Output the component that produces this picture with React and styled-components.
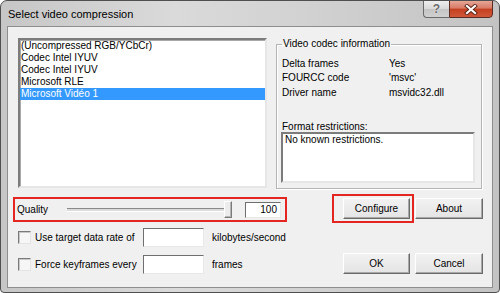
import React from 'react'
import styled, { createGlobalStyle } from 'styled-components'

const GlobalStyle = createGlobalStyle`
  html, body {
    margin: 0;
    padding: 0;
    background: #ffffff;
  }
  body {
    font-family: "Liberation Sans", Arial, sans-serif;
    font-size: 10px;
    color: #000;
  }
`

const codecs = [
  '(Uncompressed RGB/YCbCr)',
  'Codec Intel IYUV',
  'Codec Intel IYUV',
  'Microsoft RLE',
  'Microsoft Vidéo 1',
]

const info = [
  ['Delta frames', 'Yes'],
  ['FOURCC code', "'msvc'"],
  ['Driver name', 'msvidc32.dll'],
]

const App = () => {
  return (
    <>
      <GlobalStyle />
      <Window>
        <TitleBar>
          <Title>Select video compression</Title>
          <Caption>
            <HelpBtn>?</HelpBtn>
            <CloseBtn>
              <svg width="14" height="11" viewBox="0 0 14 11">
                <path d="M3 2 L11 9 M11 2 L3 9" stroke="#5b2418" strokeWidth="4" strokeLinecap="square" fill="none" />
                <path d="M3 2 L11 9 M11 2 L3 9" stroke="#ffffff" strokeWidth="2.2" strokeLinecap="square" fill="none" />
              </svg>
            </CloseBtn>
          </Caption>
        </TitleBar>

        <Client>
          <TopRow>
            <ListBox>
              {codecs.map((c, i) => (
                <ListItem key={i} $selected={i === 4}>{c}</ListItem>
              ))}
            </ListBox>

            <Group>
              <Legend>Video codec information</Legend>
              <InfoGrid>
                {info.map(([k, v]) => (
                  <React.Fragment key={k}>
                    <span>{k}</span>
                    <span>{v}</span>
                  </React.Fragment>
                ))}
              </InfoGrid>
              <SubLabel>Format restrictions:</SubLabel>
              <Memo>No known restrictions.</Memo>
            </Group>
          </TopRow>

          <BottomArea>
            <LeftCol>
              <QualityBox>
                <QualityLabel>Quality</QualityLabel>
                <Slider>
                  <Track />
                  <Thumb />
                </Slider>
                <ValueEdit>100</ValueEdit>
              </QualityBox>

              <OptionRow>
                <Check />
                <OptionLabel>Use target data rate of</OptionLabel>
                <Edit />
                <span>kilobytes/second</span>
              </OptionRow>
              <OptionRow>
                <Check />
                <OptionLabel>Force keyframes every</OptionLabel>
                <Edit />
                <span>frames</span>
              </OptionRow>
            </LeftCol>

            <RightCol>
              <ButtonRow>
                <Highlight>
                  <Button>Configure</Button>
                </Highlight>
                <Button $wide>About</Button>
              </ButtonRow>
              <ButtonRow $indent>
                <Button>OK</Button>
                <Button $wide>Cancel</Button>
              </ButtonRow>
            </RightCol>
          </BottomArea>
        </Client>
      </Window>
    </>
  )
}

const Window = styled.div`
  width: 500px;
  height: 293px;
  box-sizing: border-box;
  border: 1px solid #4f4f4f;
  border-radius: 7px 7px 4px 4px;
  background: linear-gradient(to right, #c6c6c6 0%, #dadada 35%, #d2d2d2 60%, #c3c3c3 100%);
  display: flex;
  flex-direction: column;
  overflow: hidden;
`

const TitleBar = styled.div`
  height: 25px;
  display: flex;
  align-items: center;
  padding-left: 7px;
  padding-right: 6px;
`

const Title = styled.div`
  font-size: 11px;
  color: #000;
  padding-top: 1px;
`

const Caption = styled.div`
  margin-left: auto;
  align-self: flex-start;
  display: flex;
  margin-top: -1px;
`

const HelpBtn = styled.div`
  width: 26px;
  height: 18px;
  box-sizing: border-box;
  border: 1px solid #6a6a6a;
  border-right: none;
  border-radius: 0 0 0 4px;
  background: linear-gradient(#eeeeee 0%, #d8d8d8 50%, #c4c4c4 51%, #d0d0d0 100%);
  color: #6b6b6b;
  font-weight: bold;
  font-size: 12px;
  display: flex;
  align-items: center;
  justify-content: center;
  text-shadow: 0 0 2px #fff;
`

const CloseBtn = styled.div`
  width: 44px;
  height: 18px;
  box-sizing: border-box;
  border: 1px solid #5a2c24;
  border-radius: 0 0 4px 0;
  background: linear-gradient(#e6a696 0%, #d77a66 45%, #c3401f 50%, #d0573a 100%);
  display: flex;
  align-items: center;
  justify-content: center;
`

const Client = styled.div`
  flex: 1;
  margin: 0 6px 4px 6px;
  border: 1px solid #8e8e8e;
  background: #f0f0f0;
  padding: 11px 0 0 0;
  box-sizing: border-box;
`

const TopRow = styled.div`
  display: flex;
  padding-left: 10px;
  gap: 9px;
  align-items: flex-start;
`

const ListBox = styled.div`
  width: 249px;
  height: 150px;
  box-sizing: border-box;
  background: #fff;
  border: 2px solid;
  border-color: #7c7c7c #e6e6e6 #e6e6e6 #7c7c7c;
  box-shadow: inset 1px 1px 0 #a9a9a9;
  padding: 0;
`

const ListItem = styled.div`
  height: 12px;
  line-height: 12px;
  padding-left: 1px;
  white-space: nowrap;
  background: ${p => (p.$selected ? '#3399ff' : 'transparent')};
  color: ${p => (p.$selected ? '#fff' : '#000')};
`

const Group = styled.fieldset`
  width: 206px;
  height: 151px;
  box-sizing: border-box;
  margin: 0;
  padding: 0 4px;
  border: 1px solid #b5b5b5;
  box-shadow: inset 1px 1px 0 #fff, 1px 1px 0 #fff;
  min-width: 0;
`

const Legend = styled.legend`
  padding: 0 1px;
  margin-left: 1px;
  line-height: 12px;
  font-size: 10px;
`

const InfoGrid = styled.div`
  display: grid;
  grid-template-columns: 107px auto;
  grid-auto-rows: 14.5px;
  align-items: center;
  margin-top: 6px;
  padding-left: 1px;
`

const SubLabel = styled.div`
  margin-top: 21px;
  padding-left: 1px;
  line-height: 11px;
`

const Memo = styled.div`
  width: 194px;
  height: 51px;
  box-sizing: border-box;
  background: #fff;
  border: 2px solid;
  border-color: #7c7c7c #e6e6e6 #e6e6e6 #7c7c7c;
  padding: 0 2px;
  line-height: 12px;
`

const BottomArea = styled.div`
  display: grid;
  grid-template-columns: 274px auto;
  column-gap: 45px;
  padding-left: 5px;
  margin-top: 5px;
`

const LeftCol = styled.div`
  display: flex;
  flex-direction: column;
  padding-top: 3px;
`

const QualityBox = styled.div`
  height: 25px;
  box-sizing: border-box;
  border: 2px solid #e3261f;
  display: flex;
  align-items: center;
  padding: 0 2px;
`

const QualityLabel = styled.span`
  width: 50px;
`

const Slider = styled.div`
  position: relative;
  width: 165px;
  height: 17px;
  display: flex;
  align-items: center;
`

const Track = styled.div`
  width: 160px;
  height: 2px;
  background: #dcdcdc;
  border-top: 1px solid #8a8a8a;
  border-bottom: 1px solid #fff;
`

const Thumb = styled.div`
  position: absolute;
  left: 157px;
  top: 0;
  width: 8px;
  height: 17px;
  box-sizing: border-box;
  background: #ececec;
  border: 1px solid;
  border-color: #fff #7a7a7a #7a7a7a #fff;
  box-shadow: inset -1px -1px 0 #b4b4b4;
`

const ValueEdit = styled.div`
  margin-left: 13px;
  width: 36px;
  height: 16px;
  box-sizing: border-box;
  background: #fff;
  border: 1px solid;
  border-color: #6f6f6f #e8e8e8 #e8e8e8 #6f6f6f;
  text-align: right;
  padding-right: 3px;
  line-height: 14px;
`

const OptionRow = styled.div`
  display: flex;
  align-items: center;
  height: 19px;
  padding-left: 5px;
  margin-top: 6px;
  white-space: nowrap;

  & + & {
    margin-top: 8px;
  }
`

const Check = styled.div`
  width: 13px;
  height: 13px;
  box-sizing: border-box;
  margin-right: 4px;
  background: #f6f6f6;
  border: 1px solid;
  border-color: #7a7a7a #e4e4e4 #e4e4e4 #7a7a7a;
  box-shadow: inset 1px 1px 0 #c8c8c8;
`

const OptionLabel = styled.span`
  width: 108px;
`

const Edit = styled.div`
  width: 61px;
  height: 19px;
  box-sizing: border-box;
  margin-right: 8px;
  background: #fff;
  border: 1px solid;
  border-color: #6f6f6f #e8e8e8 #e8e8e8 #6f6f6f;
`

const RightCol = styled.div`
  display: flex;
  flex-direction: column;
`

const ButtonRow = styled.div`
  display: flex;
  align-items: center;
  gap: ${p => (p.$indent ? '5px' : '1px')};
  padding-left: ${p => (p.$indent ? '11px' : '0')};
  margin-top: ${p => (p.$indent ? '30px' : '0')};
`

const Highlight = styled.div`
  border: 2px solid #e3261f;
  padding: 2px 2px 2px 9px;
  display: flex;
`

const Button = styled.div`
  width: ${p => (p.$wide ? '68px' : '67px')};
  height: 21px;
  box-sizing: border-box;
  background: linear-gradient(#f2f2f2, #e4e4e4);
  border: 1px solid;
  border-color: #ffffff #6a6a6a #6a6a6a #ffffff;
  box-shadow: inset -1px -1px 0 #a8a8a8;
  display: flex;
  align-items: center;
  justify-content: center;
  font-size: 10px;
  color: #000;
`

export default App
